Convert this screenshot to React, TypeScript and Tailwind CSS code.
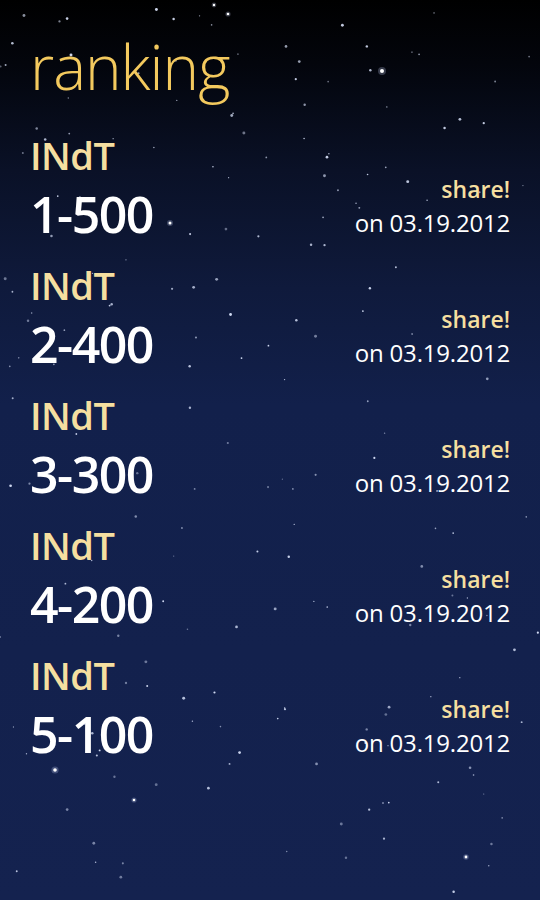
import React from 'react';

interface Rank {
    label: string;
    score: string;
    date: string;
}

const ranks: Rank[] = [
    { label: 'INdT', score: '1-500', date: '03.19.2012' },
    { label: 'INdT', score: '2-400', date: '03.19.2012' },
    { label: 'INdT', score: '3-300', date: '03.19.2012' },
    { label: 'INdT', score: '4-200', date: '03.19.2012' },
    { label: 'INdT', score: '5-100', date: '03.19.2012' },
];

// small seeded generator so the sky is the same every render
function makeStars(count: number) {
    let seed = 20120319;
    const rand = () => {
        seed = (seed * 1103515245 + 12345) % 2147483648;
        return seed / 2147483648;
    };
    const stars = [];
    for (let i = 0; i < count; i++) {
        stars.push({
            x: rand() * 540,
            y: rand() * 900,
            r: 0.6 + rand() * 0.9,
            o: 0.4 + rand() * 0.55,
        });
    }
    return stars;
}

const stars = makeStars(190);

// a few brighter ones seen in the picture
const bright = [
    { x: 382, y: 71, r: 2 },
    { x: 55, y: 770, r: 1.8 },
    { x: 170, y: 223, r: 1.5 },
    { x: 228, y: 14, r: 1.3 },
    { x: 214, y: 5, r: 1.2 },
    { x: 466, y: 857, r: 1.4 },
    { x: 134, y: 800, r: 1.3 },
];

function StarField() {
    return (
        <svg className="absolute inset-0 pointer-events-none" width="540" height="900" viewBox="0 0 540 900">
            {stars.map((s, i) => (
                <circle key={i} cx={s.x} cy={s.y} r={s.r} fill="#dfe8ff" opacity={s.o} />
            ))}
            {bright.map((s, i) => (
                <g key={'b' + i}>
                    <circle cx={s.x} cy={s.y} r={s.r * 2} fill="#cfdcff" opacity={0.25} />
                    <circle cx={s.x} cy={s.y} r={s.r} fill="#ffffff" />
                </g>
            ))}
        </svg>
    );
}

function RankRow({ rank }: { rank: Rank }) {
    return (
        <div className="flex justify-between h-[130px]">
            <div className="flex flex-col">
                <div className="text-[38px] leading-[44px] font-semibold text-[#f5dfa0] tracking-[-0.5px]">{rank.label}</div>
                <div className="mt-[9px] text-[50px] leading-[56px] font-semibold text-white tracking-[-1.5px]">{rank.score}</div>
            </div>
            <div className="flex flex-col items-end pt-[42px]">
                <div className="text-[23px] leading-[28px] font-semibold text-[#f5dfa0]">share!</div>
                <div className="mt-1 text-[24px] leading-[32px] text-white tracking-[-0.2px]">on {rank.date}</div>
            </div>
        </div>
    );
}

export default function App() {
    return (
        <div
            className="relative w-full h-[900px] overflow-hidden bg-[linear-gradient(to_bottom,#000000_0%,#03050c_7%,#0a1127_19%,#0f1a3c_32%,#12204b_45%,#14224f_100%)]"
            style={{ fontFamily: '"Open Sans", "Noto Sans", sans-serif' }}
        >
            <StarField />
            <div className="relative px-[30px] pt-[31px]">
                <h1 className="text-[62px] leading-[70px] font-light text-[#f3c95e] tracking-[-1px]">ranking</h1>
                <div className="mt-[32px] flex flex-col">
                    {ranks.map((r, i) => (
                        <RankRow key={i} rank={r} />
                    ))}
                </div>
            </div>
        </div>
    );
}
